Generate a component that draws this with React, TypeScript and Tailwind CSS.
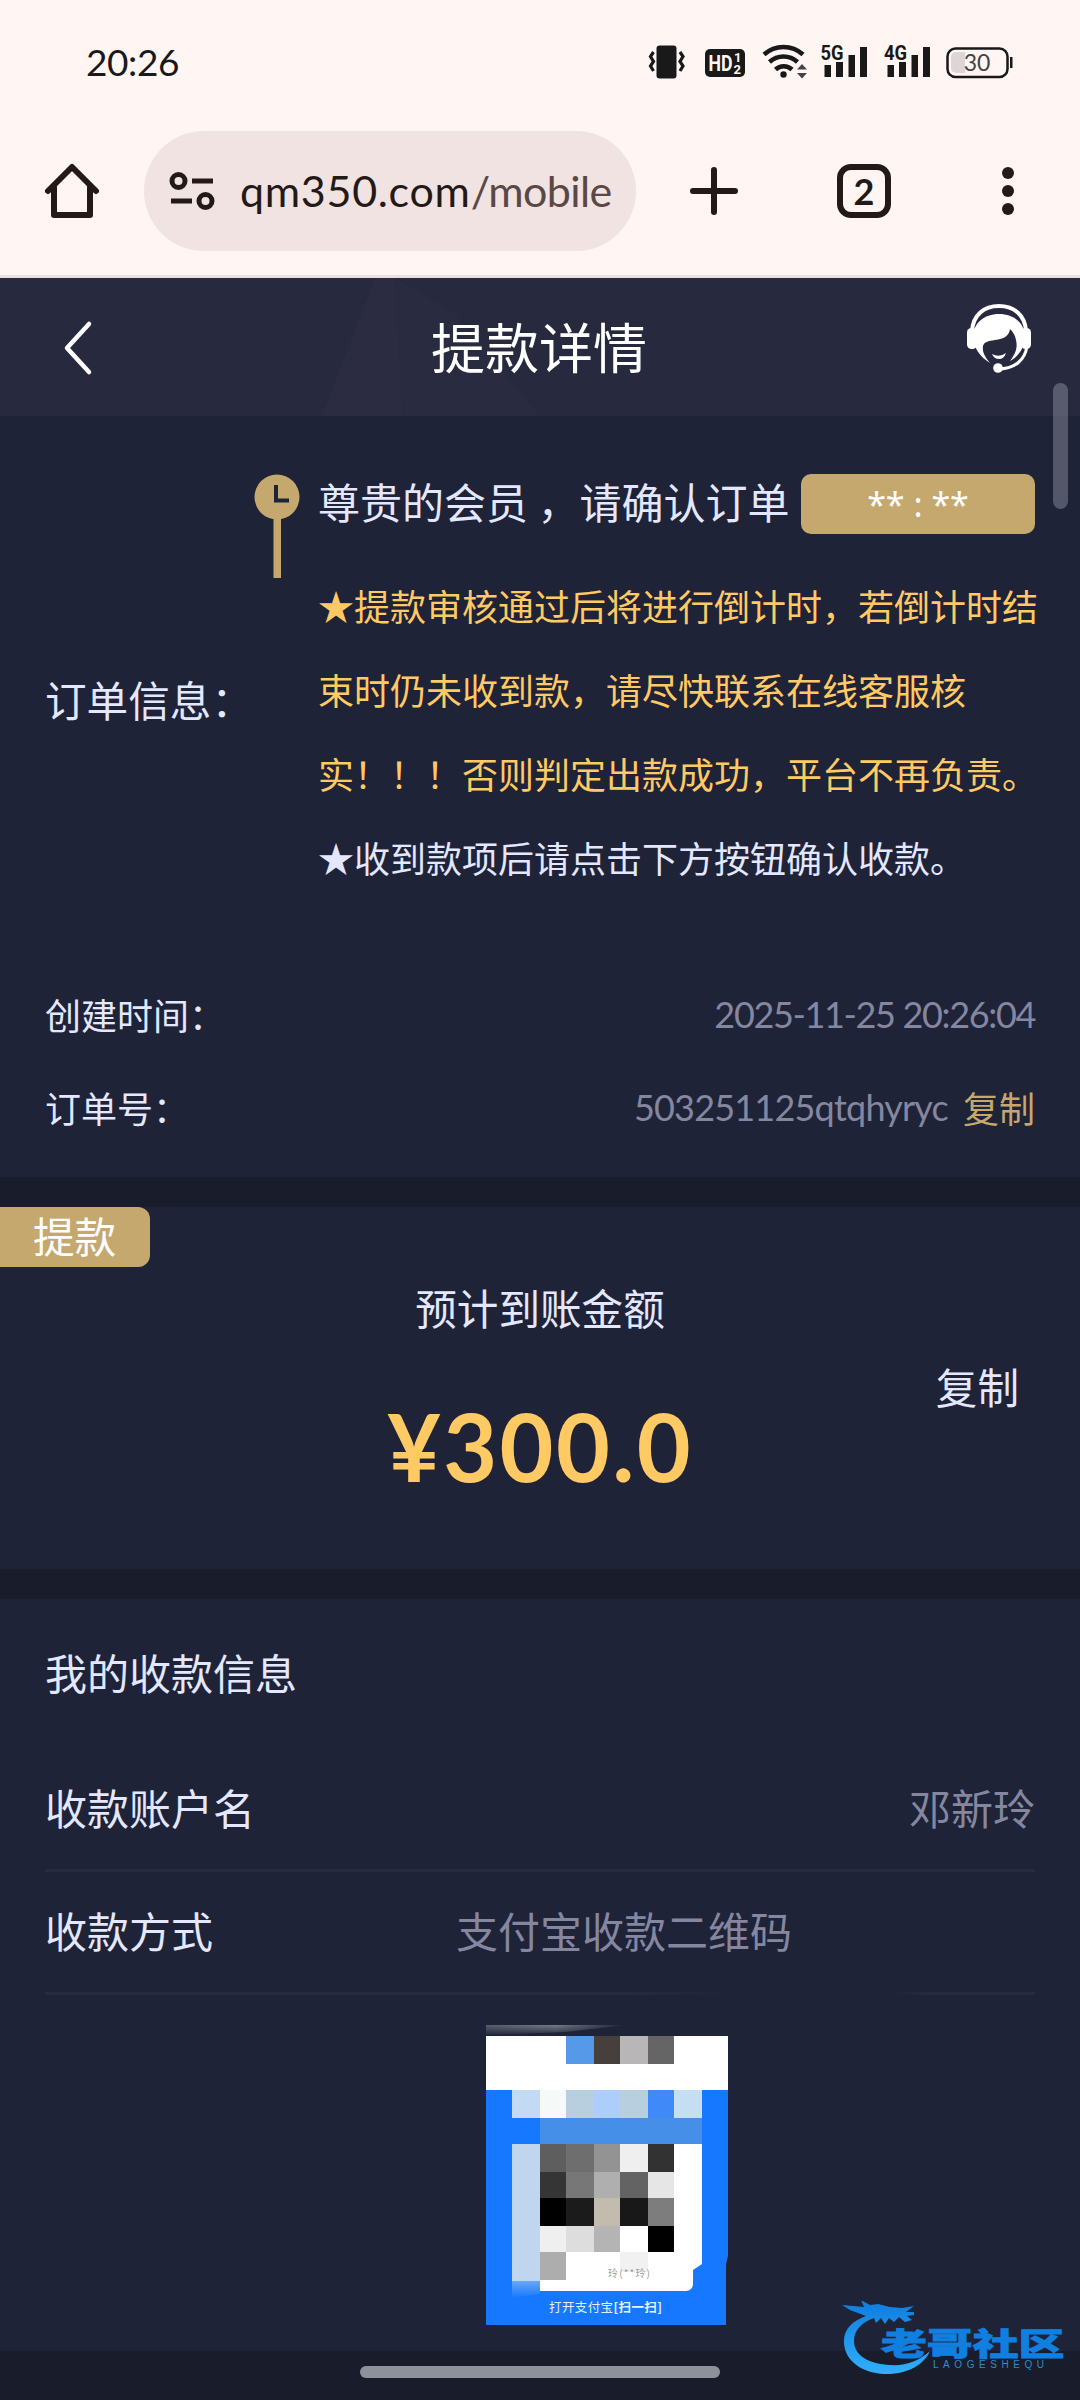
const notice = [
  "★提款审核通过后将进行倒计时，若倒计时结",
  "束时仍未收到款，请尽快联系在线客服核",
  "实！！！否则判定出款成功，平台不再负责。",
];

// x, y, width, height, fill
const mosaic: [number, number, number, number, string][] = [
  [80, 11, 28, 28, "#5599e8"],
  [108, 11, 26, 28, "#46403c"],
  [134, 11, 28, 28, "#b9b6b7"],
  [162, 11, 26, 28, "#666565"],
  [26, 65, 28, 28, "#c2daf4"],
  [54, 65, 26, 28, "#f5f9f7"],
  [80, 65, 28, 28, "#b8cfe0"],
  [108, 65, 26, 28, "#adcefb"],
  [134, 65, 28, 28, "#b8cfe0"],
  [162, 65, 26, 28, "#3f8af8"],
  [188, 65, 28, 28, "#c5def1"],
  [54, 93, 162, 26, "#458fe8"],
  [26, 119, 28, 137, "#bfd6ee"],
  [54, 119, 26, 28, "#5e5e5e"],
  [80, 119, 28, 28, "#6e6e6e"],
  [108, 119, 26, 28, "#939393"],
  [134, 119, 28, 28, "#efefef"],
  [162, 119, 26, 28, "#323232"],
  [54, 147, 26, 26, "#353535"],
  [80, 147, 28, 26, "#777777"],
  [108, 147, 26, 26, "#afafaf"],
  [134, 147, 28, 26, "#636363"],
  [162, 147, 26, 26, "#e6e6e6"],
  [54, 173, 26, 28, "#000000"],
  [80, 173, 28, 28, "#1b1b1b"],
  [108, 173, 26, 28, "#c1bcae"],
  [134, 173, 28, 28, "#181818"],
  [162, 173, 26, 28, "#7d7d7d"],
  [54, 201, 26, 26, "#efefef"],
  [80, 201, 28, 26, "#dddddd"],
  [108, 201, 26, 26, "#b4b4b4"],
  [162, 201, 26, 26, "#000000"],
  [54, 227, 26, 28, "#adadad"],
  [134, 227, 28, 20, "#f1f1f1"],
];

function StatusIcons() {
  return (
    <svg className="h-[44px] w-[370px]" viewBox="644 40 370 44" fill="#191919">
      <rect x="656.500" y="45.500" width="20" height="33" rx="3" />
      <g fill="none" stroke="#191919" strokeWidth="3.200">
        <path d="M653.500 52l-3 4.500 3 5-3 4.500 3 5M680 52l3 4.500-3 5 3 4.500-3 5" />
      </g>
      <rect x="705" y="49" width="40" height="28" rx="5" />
      <g fill="#fff6f4" fontFamily="Roboto, sans-serif" fontWeight="700">
        <text x="708.500" y="71" fontSize="22" textLength="24" lengthAdjust="spacingAndGlyphs">HD</text>
        <text x="734" y="62" fontSize="13">1</text>
        <text x="733.500" y="74" fontSize="13">2</text>
      </g>
      <g fill="none" stroke="#191919" strokeWidth="4.500">
        <path d="M764 54.500a29 29 0 0 1 39 0M769.500 62a20.500 20.500 0 0 1 28 0M775.500 69.500a12 12 0 0 1 16.500 0" />
      </g>
      <circle cx="783.500" cy="74.500" r="3.200" />
      <path d="M797 69.500l5-5.500 5 5.500zM797 73l5 5.500 5-5.500z" fill="#444" />
      <g fontFamily="Roboto, sans-serif" fontWeight="700" fontSize="20">
        <text x="820.500" y="60" textLength="23" lengthAdjust="spacingAndGlyphs">5G</text>
        <text x="884" y="60" textLength="23" lengthAdjust="spacingAndGlyphs">4G</text>
      </g>
      <path d="M824.500 65h6.500v12h-6.500zM836 62h7v15h-7zM848.500 55h6.500v22h-6.500zM860 47h7v30h-7z" />
      <path d="M887.500 65h6.500v12h-6.500zM899 62h7v15h-7zM911.500 55h6.500v22h-6.500zM923 47h7v30h-7z" />
      <rect x="947.500" y="48.500" width="60" height="28.500" rx="8" fill="none" stroke="#191919" strokeWidth="2.500" />
      <path d="M956 52h9v21h-9a5 5 0 0 1-5-5V57a5 5 0 0 1 5-5z" fill="#ded6d6" />
      <path d="M1010 57h2.500v11h-2.500z" />
      <text x="977" y="71" textAnchor="middle" fontSize="23" fill="#444" fontFamily="Lato, sans-serif">30</text>
    </svg>
  );
}

function StatusBar() {
  return (
    <div className="flex h-[131px] items-start justify-between pl-[86px] pr-[66px]">
      <span className="mt-[37px] font-[Lato] text-[37px] leading-[50px] tracking-[-0.4px] text-[#191919]">20:26</span>
      <div className="mt-[40px]">
        <StatusIcons />
      </div>
    </div>
  );
}

function BrowserBar() {
  return (
    <div className="flex h-[147px] items-start border-b-3 border-[#ecdfe3] pl-[42px]">
      <svg className="mt-[26px] h-[64px] w-[60px]" viewBox="0 0 60 64" fill="none" stroke="#231a18" strokeWidth="6" strokeLinejoin="round" strokeLinecap="round">
        <path d="M6 34L30 10l24 24M12 30v28h36V30" />
      </svg>
      <div className="ml-[42px] flex h-[120px] w-[492px] items-center rounded-full bg-[#f0e3e2] pl-[24px]">
        <svg className="h-[44px] w-[48px]" viewBox="0 0 48 44" fill="none" stroke="#231a18" strokeWidth="5">
          <circle cx="10.500" cy="12" r="6.500" />
          <circle cx="37.500" cy="32" r="6.500" />
          <path d="M24 12h21M3 32h21" />
        </svg>
        <div className="ml-[24px] w-[373px] overflow-hidden whitespace-nowrap font-[Lato] text-[43px] tracking-[0.7px] text-[#231a18]">
          qm350.com<span className="tracking-[-0.6px] text-[#5a4846]">/mobile</span>
        </div>
      </div>
      <svg className="ml-[52px] mt-[33px] h-[54px] w-[52px]" viewBox="0 0 52 54" stroke="#231a18" strokeWidth="6" strokeLinecap="round">
        <path d="M26 6v42M5 27h42" />
      </svg>
      <div className="ml-[97px] mt-[33px] flex h-[54px] w-[54px] items-center justify-center rounded-[14px] border-6 border-[#231a18] font-[Lato] text-[36px] font-bold text-[#231a18]">
        2
      </div>
      <div className="ml-[111px] mt-[36px] flex flex-col gap-[6px]">
        <i className="size-[12px] rounded-full bg-[#231a18]" />
        <i className="size-[12px] rounded-full bg-[#231a18]" />
        <i className="size-[12px] rounded-full bg-[#231a18]" />
      </div>
    </div>
  );
}

function SupportIcon() {
  return (
    <svg className="h-[70px] w-[66px]" viewBox="0 0 66 70" fill="#fff">
      <path d="M6 28C7 12 18 3 33 3s26 9 27 25" fill="none" stroke="#fff" strokeWidth="4" />
      <rect x="1" y="25" width="10" height="21" rx="4.500" />
      <rect x="55" y="25" width="10" height="21" rx="4.500" />
      <path d="M7 35C7 20 18 11 33 11s26 9 26 24c-1 10-6 18-15 23 5-7 8-13 6-21-1-5-3-8-6-11-1 7-6 10-15 11-7 1-11 2-12 6-1 6 2 11 7 17C14 54 8 45 7 35z" />
      <path d="M26 51q7 4 14-1-2 6-7 6t-7-5z" />
      <path d="M61 43c-2 14-12 23-29 23" fill="none" stroke="#fff" strokeWidth="3" />
      <circle cx="32" cy="65" r="4.800" />
    </svg>
  );
}

function Header() {
  return (
    <header className="relative flex h-[138px] items-center justify-between overflow-hidden bg-[#27293e] pl-[46px] pr-[48px] text-white">
      <svg className="absolute inset-0 h-full w-full" viewBox="0 0 1080 138">
        <path d="M375 0h20l8 138h-81z" fill="#2b2c41" />
        <path d="M403 138L395 0l60 35 85 103z" fill="#292b40" />
      </svg>
      <svg className="relative h-[70px] w-[66px]" viewBox="0 0 66 70" fill="none" stroke="#fff" strokeWidth="4.500" strokeLinecap="round" strokeLinejoin="round">
        <path d="M43 12L21 36l22 24" />
      </svg>
      <h1 className="relative mb-[2px] text-[54px] leading-[60px]">提款详情</h1>
      <div className="relative mb-[18px]">
        <SupportIcon />
      </div>
    </header>
  );
}

function OrderInfo() {
  return (
    <section className="h-[761px] px-[45px] pt-[58px]">
      <div className="flex">
        <div className="w-[209px] shrink-0 whitespace-nowrap pt-[193px] text-[41.6px] leading-[64px]">订单信息：</div>
        <svg className="h-[106px] w-[46px] shrink-0" viewBox="0 0 46 106">
          <path d="M19.500 40h7.500v64h-7.500z" fill="#c5a86e" />
          <circle cx="23" cy="23" r="22.500" fill="#c5a86e" />
          <path d="M22 11v15.500h13" fill="none" stroke="#1f2337" strokeWidth="4" />
        </svg>
        <div className="ml-[18px] shrink-0 whitespace-nowrap">
          <div className="flex h-[60px]">
            <span className="w-[483px] text-[42px] leading-[54px]">尊贵的会员 ，请确认订单</span>
            <span className="flex h-[60px] w-[234px] items-center justify-center rounded-[10px] bg-[#c5a86e] font-['Noto_Sans'] text-[34px] text-white">
              ** : **
            </span>
          </div>
          <div className="pt-[29px] text-[36px] leading-[84px]">
            {notice.map((line) => (
              <p key={line} className="text-[#ffc964]">{line}</p>
            ))}
            <p>★收到款项后请点击下方按钮确认收款。</p>
          </div>
        </div>
      </div>
      <div className="mt-[69px] flex items-center justify-between text-[36px] leading-[93px]">
        <span>创建时间：</span>
        <span className="font-[Lato] tracking-[-1.35px] text-[#8587a0]">2025-11-25 20:26:04</span>
      </div>
      <div className="flex items-center justify-between text-[36px] leading-[93px]">
        <span>订单号：</span>
        <span className="flex">
          <span className="font-[Lato] tracking-[-0.8px] text-[#8587a0]">503251125qtqhyryc</span>
          <span className="ml-[15px] text-[#c5a86e]">复制</span>
        </span>
      </div>
    </section>
  );
}

function Amount() {
  return (
    <section className="relative h-[362px] text-[41.6px]">
      <span className="flex h-[60px] w-[150px] items-center rounded-r-[12px] bg-[#c5a86e] pb-[3px] pl-[33px] text-white">提款</span>
      <p className="mt-[10px] text-center leading-[60px]">预计到账金额</p>
      <p className="mt-[49px] text-center font-[Lato] text-[93px] font-bold leading-[120px] tracking-[2.4px] text-[#ffc964]">¥300.0</p>
      <span className="absolute right-[61px] top-[149px] leading-[60px]">复制</span>
    </section>
  );
}

function QrPreview() {
  return (
    <svg className="ml-[441px] mt-[30px] h-[300px] w-[243px]" viewBox="0 0 243 300">
      <defs>
        <linearGradient id="strip">
          <stop offset="0" stopColor="#5a5c6c" />
          <stop offset="0.500" stopColor="#777987" />
          <stop offset="1" stopColor="#1f2337" />
        </linearGradient>
        <linearGradient id="strip-shade" x1="0" y1="0" x2="0" y2="1">
          <stop offset="0" stopColor="#1f2337" stopOpacity="0" />
          <stop offset="1" stopColor="#1f2337" stopOpacity="0.900" />
        </linearGradient>
        <linearGradient id="fade" x1="0" y1="0" x2="0" y2="1">
          <stop offset="0" stopColor="#6aa7f6" />
          <stop offset="1" stopColor="#1578fe" />
        </linearGradient>
      </defs>
      <path d="M0 0h140L80 7 0 10z" fill="url(#strip)" />
      <path d="M0 0h140v10H0z" fill="url(#strip-shade)" />
      <path d="M0 11h242v220l-2 8v61H0z" fill="#1578fe" />
      <path d="M0 11h242v54H0z" fill="#fff" />
      <path d="M26 119h190v120l-9 6v14a7 7 0 0 1-7 7H54l-28 4z" fill="#fff" />
      {mosaic.map(([x, y, w, h, fill]) => (
        <rect key={`${x}-${y}`} x={x} y={y} width={w} height={h} fill={fill} shapeRendering="crispEdges" />
      ))}
      <path d="M26 256h28v13l-28 4z" fill="url(#fade)" />
      <text x="122" y="252" fontSize="10" fill="#999" textLength="42">玲(**玲)</text>
      <text x="63" y="287" fontSize="12.500" fill="#e4f2ff" textLength="113">
        打开支付宝<tspan fontWeight="700">[扫一扫]</tspan>
      </text>
    </svg>
  );
}

function PayeeInfo() {
  return (
    <section className="h-[752px] px-[45px] pt-[43px] text-[42px] leading-[60px]">
      <h2>我的收款信息</h2>
      <div className="mt-[47px] flex h-[123px] items-center justify-between border-b-3 border-[#262b40] pb-[5px]">
        <span>收款账户名</span>
        <span className="text-[#8587a0]">邓新玲</span>
      </div>
      <div className="flex h-[120px] items-center pb-[4px]">
        <span className="w-[411px]">收款方式</span>
        <span className="text-[#8587a0]">支付宝收款二维码</span>
      </div>
      <div className="flex justify-between">
        <div className="h-[3px] w-[690px] bg-linear-to-r from-[#262b40] from-85% to-[#1f2337]" />
        <div className="h-[3px] w-[140px] bg-linear-to-l from-[#262b40] from-80% to-[#1f2337]" />
      </div>
      <QrPreview />
    </section>
  );
}

function Watermark() {
  return (
    <svg className="absolute bottom-[13px] left-[840px] h-[86px] w-[232px]" viewBox="840 2300 232 86">
      <defs>
        <linearGradient id="water" x1="0" y1="2304" x2="0" y2="2374" gradientUnits="userSpaceOnUse">
          <stop offset="0" stopColor="#117fe0" />
          <stop offset="1" stopColor="#31b0fb" />
        </linearGradient>
      </defs>
      <g fill="url(#water)">
        <path d="M866 2315c-14 5-23 14-22 27 1 20 22 32 46 31 18-1 34-9 40-23-11 10-24 15-40 14-20-1-36-9-36-24 0-11 8-19 20-23l2 5 5-5 4 6 4-6 5 4 5-5 6 5 7-2-5-4 7-1v-3h-8l8-6-12 2-12-1-12-3-8 1-9-5 3 7-22-2 8 5z" />
        <text transform="translate(881 2353.500) scale(1.480 1)" fontSize="31" fontWeight="900" stroke="url(#water)" strokeWidth="0.800">老哥社区</text>
      </g>
      <text x="933" y="2367" fontSize="10" fill="#2f8cc8" fontFamily="Liberation Sans, sans-serif" textLength="111">LAOGESHEQU</text>
    </svg>
  );
}

export default function App() {
  return (
    <div className="relative h-[2400px] w-[1080px] overflow-hidden bg-[#191c2b] font-['Noto_Sans_CJK_SC',sans-serif] text-[#e3e7ff]">
      <div className="bg-[#fff6f4]">
        <StatusBar />
        <BrowserBar />
      </div>
      <Header />
      <main className="flex flex-col gap-[30px] *:bg-[#1f2337]">
        <OrderInfo />
        <Amount />
        <PayeeInfo />
      </main>
      <div className="mx-auto mt-[15px] h-[12px] w-[360px] rounded-full bg-[#8f919a]" />
      <div className="absolute right-[12px] top-[383px] h-[126px] w-[15px] rounded-full bg-[#8a8c9c]/50" />
      <Watermark />
    </div>
  );
}
